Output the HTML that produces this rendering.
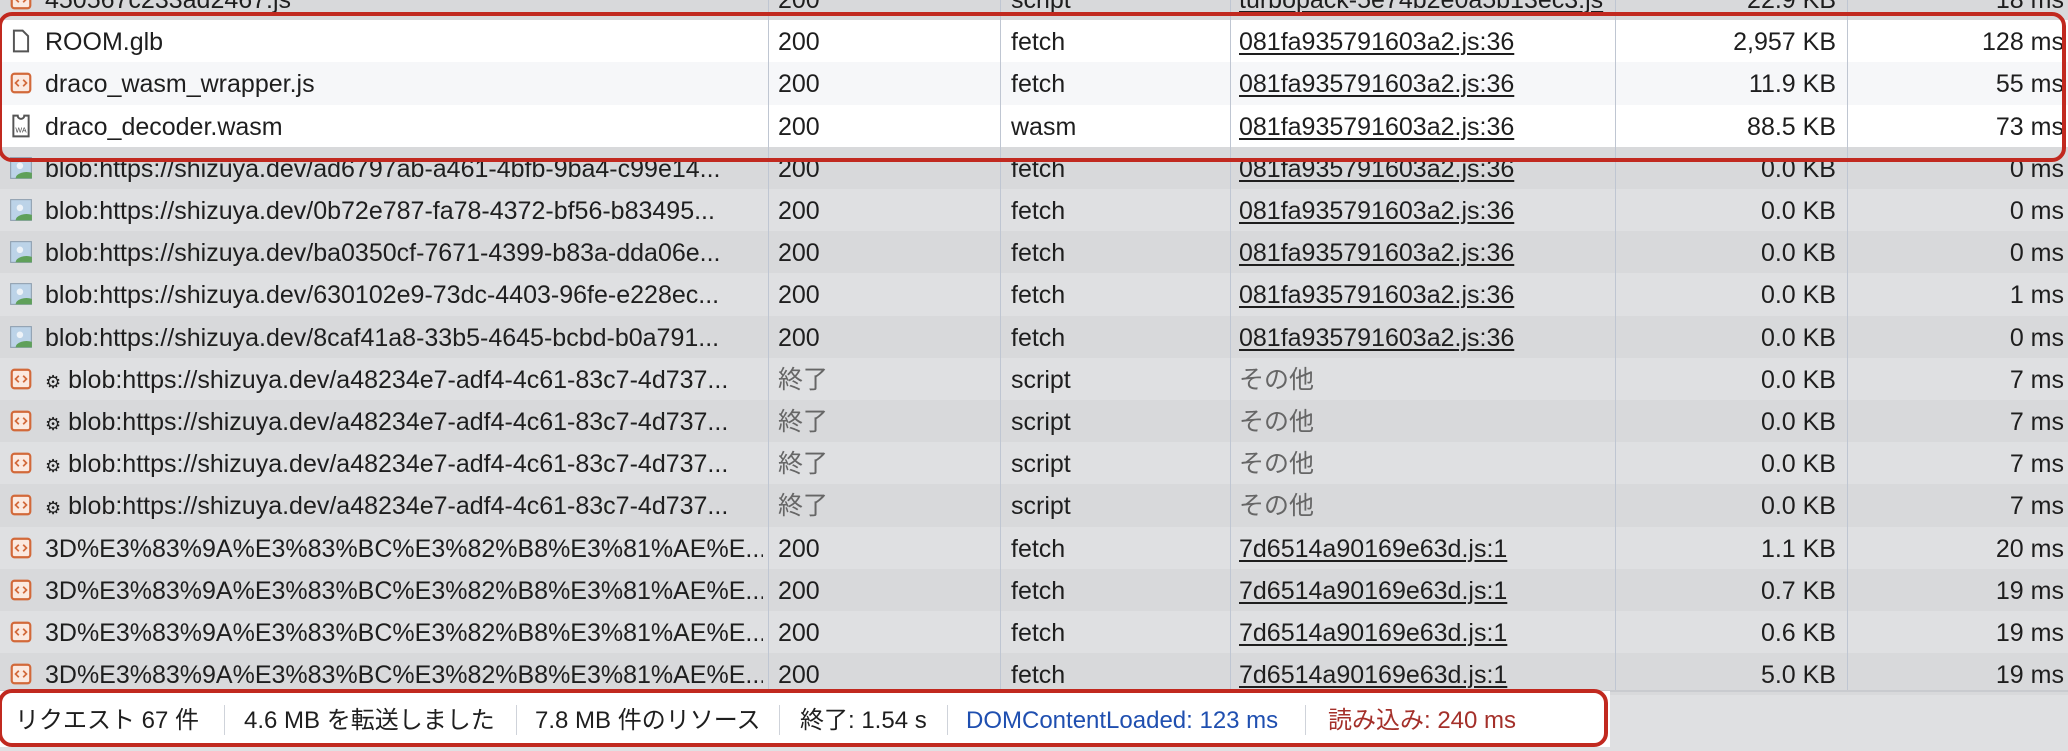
<!DOCTYPE html>
<html><head><meta charset="utf-8"><style>
*{margin:0;padding:0;box-sizing:border-box}
body{width:2068px;height:748px;overflow:hidden;background:#dfe0e2;font-family:"Liberation Sans","Noto Sans CJK JP",sans-serif;font-size:25px;color:#1e1e1e;position:relative}
.row{position:absolute;left:0;width:2068px;height:42.2px;line-height:44px;white-space:nowrap}
.row span{position:absolute;top:0}
.n{left:45px;width:718px;overflow:hidden}.s{left:778px}.t{left:1011px}.i{left:1239px;text-decoration:underline;text-decoration-thickness:1.5px;text-underline-offset:3px}
.z{right:232px}.m{right:4px}
.g{color:#666}
.vl{position:absolute;top:0;width:1px;height:690px;background:#bfc6d2}
.ic{position:absolute;left:10px;top:9px;width:22px;height:24px}
.box{position:absolute;border:4px solid #c1291f;border-radius:14px}
.foot{position:absolute;left:0;top:691px;width:1610px;height:56px;background:#fff;font-size:24px;line-height:60px}
.foot span{position:absolute;top:0}
.sep{position:absolute;top:14px;width:1px;height:30px;background:#cfd3da}
</style></head><body>
<div style="position:absolute;left:0;top:0;width:2px;height:690px;background:#b8b8b8"></div>
<div id="rows"></div>
<div class="vl" style="left:768px"></div>
<div class="vl" style="left:1000px"></div>
<div class="vl" style="left:1230px"></div>
<div class="vl" style="left:1615px"></div>
<div class="vl" style="left:1847px"></div>
<div style="position:absolute;left:0;top:690px;width:2068px;height:2px;background:#c9cbcf"></div>
<div class="foot">
<span style="left:15px">リクエスト 67 件</span><div class="sep" style="left:224px"></div>
<span style="left:244px">4.6 MB を転送しました</span><div class="sep" style="left:516px"></div>
<span style="left:535px">7.8 MB 件のリソース</span><div class="sep" style="left:779px"></div>
<span style="left:800px">終了: 1.54 s</span><div class="sep" style="left:947px"></div>
<span style="left:966px;color:#1f4fb0">DOMContentLoaded: 123 ms</span><div class="sep" style="left:1305px"></div>
<span style="left:1328px;color:#a4302a">読み込み: 240 ms</span>
</div>
<div class="box" style="left:-2px;top:12px;width:2068px;height:150px"></div>
<div class="box" style="left:-2px;top:689px;width:1610px;height:58px"></div>
<script>
var js='<svg class="ic" viewBox="0 0 20 22"><rect x="1.5" y="2.5" width="17" height="17" rx="2.5" fill="#fbe9e0" stroke="#d2693a" stroke-width="2"/><path d="M8 8l-3 3 3 3M12 8l3 3-3 3" stroke="#d2693a" stroke-width="1.6" fill="none"/></svg>';
var doc='<svg class="ic" viewBox="0 0 20 22"><path d="M3.5 1.5h8l5 5v14h-13z" fill="#fff" stroke="#555" stroke-width="1.8"/></svg>';
var wa='<svg class="ic" viewBox="0 0 20 22"><path d="M3 1.5h4a3 3 0 0 0 6 0h4v19H3z" fill="#fff" stroke="#555" stroke-width="1.8"/><text x="10" y="17" font-size="6.5" text-anchor="middle" font-family="Liberation Sans" fill="#444">WA</text></svg>';
var img='<svg class="ic" viewBox="0 0 20 22"><rect x="0.5" y="1.5" width="19" height="19" fill="#bcd3e8" stroke="#8e9fb0"/><path d="M5 20.5a10 6 0 0 1 15-5v5z" fill="#5fa05a"/><circle cx="9" cy="9" r="3" fill="#eef3f8"/></svg>';
var gear='<span style="position:static;font-size:18px">⚙</span> ';
var R=[
[js,'450567c233ad2467.js','200','script','turbopack-5e74b2e0a5b13ec3.js','22.9 KB','18 ms',0],
[doc,'ROOM.glb','200','fetch','081fa935791603a2.js:36','2,957 KB','128 ms',0],
[js,'draco_wasm_wrapper.js','200','fetch','081fa935791603a2.js:36','11.9 KB','55 ms',0],
[wa,'draco_decoder.wasm','200','wasm','081fa935791603a2.js:36','88.5 KB','73 ms',0],
[img,'blob:https://shizuya.dev/ad6797ab-a461-4bfb-9ba4-c99e14...','200','fetch','081fa935791603a2.js:36','0.0 KB','0 ms',0],
[img,'blob:https://shizuya.dev/0b72e787-fa78-4372-bf56-b83495...','200','fetch','081fa935791603a2.js:36','0.0 KB','0 ms',0],
[img,'blob:https://shizuya.dev/ba0350cf-7671-4399-b83a-dda06e...','200','fetch','081fa935791603a2.js:36','0.0 KB','0 ms',0],
[img,'blob:https://shizuya.dev/630102e9-73dc-4403-96fe-e228ec...','200','fetch','081fa935791603a2.js:36','0.0 KB','1 ms',0],
[img,'blob:https://shizuya.dev/8caf41a8-33b5-4645-bcbd-b0a791...','200','fetch','081fa935791603a2.js:36','0.0 KB','0 ms',0]];
for(var k=0;k<4;k++)R.push([js,gear+'blob:https://shizuya.dev/a48234e7-adf4-4c61-83c7-4d737...','終了','script','その他','0.0 KB','7 ms',1]);
[['1.1 KB','20 ms'],['0.7 KB','19 ms'],['0.6 KB','19 ms'],['5.0 KB','19 ms']].forEach(function(a){R.push([js,'3D%E3%83%9A%E3%83%BC%E3%82%B8%E3%81%AE%E...','200','fetch','7d6514a90169e63d.js:1',a[0],a[1],0])});
var h='';
R.forEach(function(r,i){
var top=-22+42.2*i;var bg;
if(i>=1&&i<=3)bg=(i==2?'#f6f7f9':'#fff');else bg=(i%2?'#dfe0e2':'#d8d9db');
var oth=r[7];
h+='<div class="row" style="top:'+top+'px;background:'+bg+'">'+r[0]+'<span class="n">'+r[1]+'</span><span class="s'+(oth?' g':'')+'">'+r[2]+'</span><span class="t">'+r[3]+'</span><span class="'+(oth?'i g" style="text-decoration:none':'i')+'">'+r[4]+'</span><span class="z">'+r[5]+'</span><span class="m">'+r[6]+'</span></div>';
});
document.getElementById('rows').innerHTML=h;
</script>
</body></html>
